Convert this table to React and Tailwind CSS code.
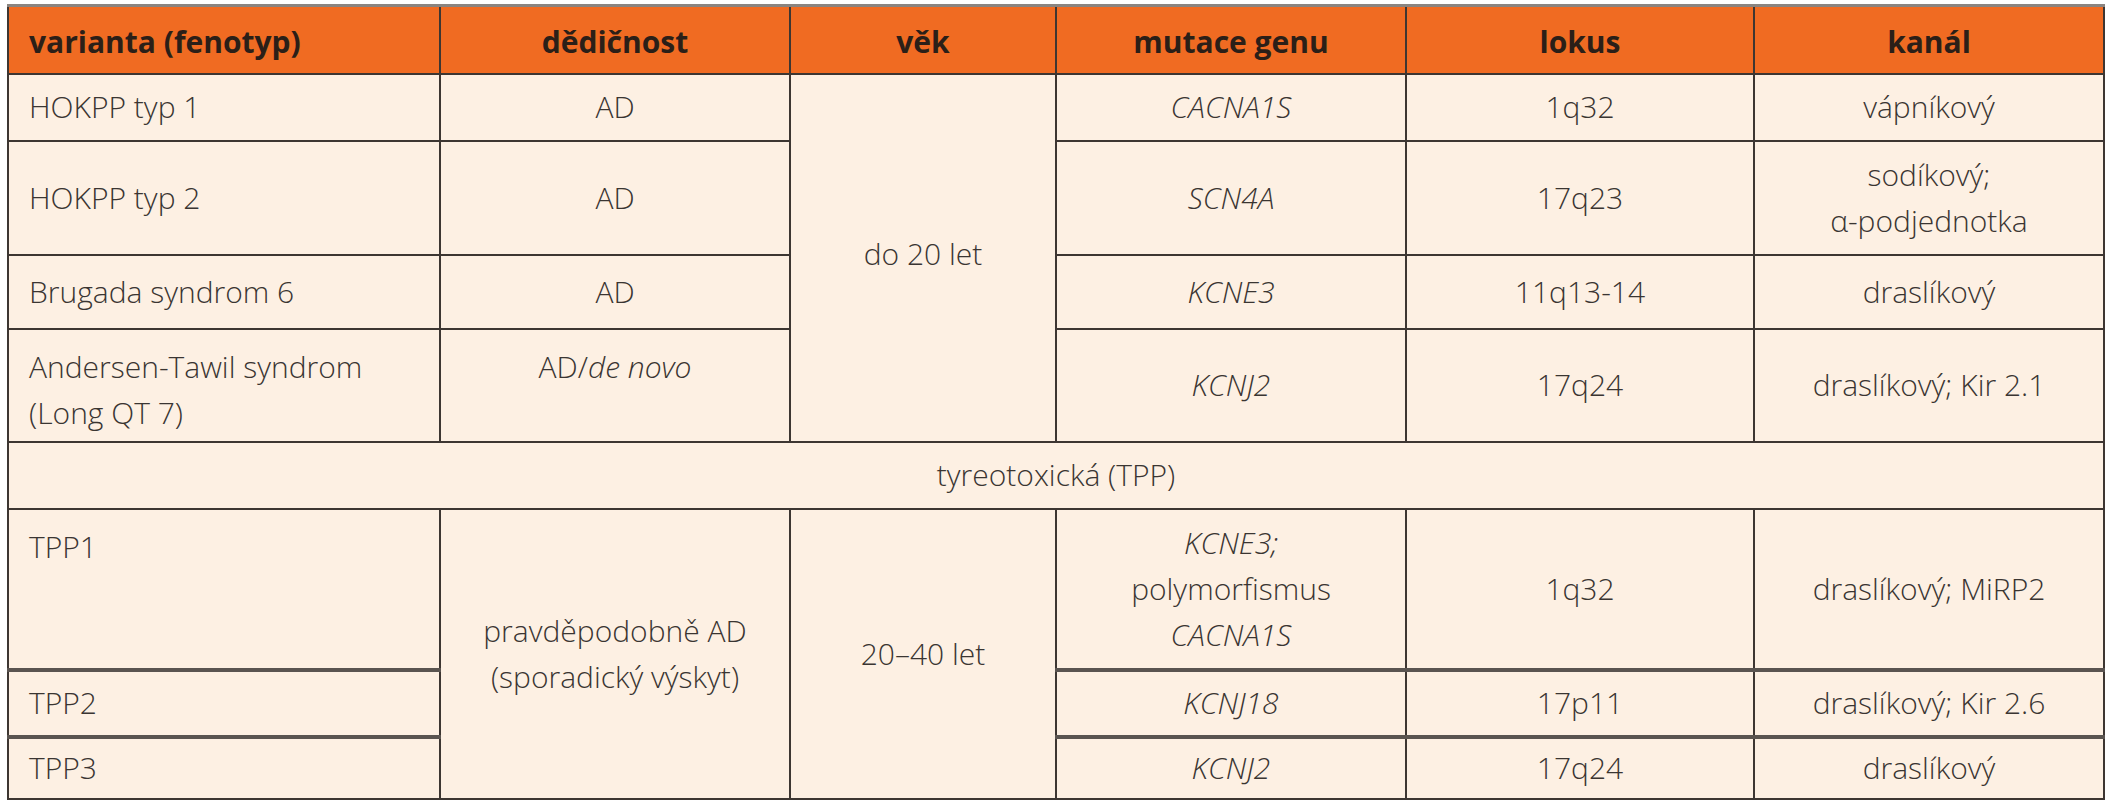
import React from "react";

const cell = "border-2 border-[#3d3632] align-middle text-center px-3";
const first = "border-2 border-[#3d3632] align-middle text-left pl-5 pr-3";

export default function App() {
  return (
    <div className="w-[2116px] h-[800px] bg-white pt-[4px] pl-[7px] font-['Open_Sans',sans-serif] font-light text-[30px] leading-[46px] text-[#3a3532]">
      <table className="table-fixed border-collapse w-[2096px] bg-[#fdf0e3] border-t-[3px] border-t-[#8a8480]">
        <colgroup>
          <col className="w-[432px]" />
          <col className="w-[350px]" />
          <col className="w-[266px]" />
          <col className="w-[350px]" />
          <col className="w-[348px]" />
          <col className="w-[350px]" />
        </colgroup>
        <thead>
          {/* HEADER */}
          <tr className="h-[68px] bg-[#f06b22] text-[#2b1f18] font-bold">
            <th className={first + " pt-1"}>varianta (fenotyp)</th>
            <th className={cell + " pt-1"}>dědičnost</th>
            <th className={cell + " pt-1"}>věk</th>
            <th className={cell + " pt-1"}>mutace genu</th>
            <th className={cell + " pt-1"}>lokus</th>
            <th className={cell + " pt-1"}>kanál</th>
          </tr>
        </thead>
        <tbody>
          <tr className="h-[67px]">
            <td className={first}>HOKPP typ 1</td>
            <td className={cell}>AD</td>
            <td className={cell} rowSpan={4}>
              <div className="pb-2">do 20 let</div>
            </td>
            <td className={cell + " italic"}>CACNA1S</td>
            <td className={cell}>1q32</td>
            <td className={cell}>vápníkový</td>
          </tr>
          <tr className="h-[114px]">
            <td className={first}>HOKPP typ 2</td>
            <td className={cell}>AD</td>
            <td className={cell + " italic"}>SCN4A</td>
            <td className={cell}>17q23</td>
            <td className={cell}>
              sodíkový;
              <br />
              α-podjednotka
            </td>
          </tr>
          <tr className="h-[74px]">
            <td className={first}>Brugada syndrom 6</td>
            <td className={cell}>AD</td>
            <td className={cell + " italic"}>KCNE3</td>
            <td className={cell}>11q13-14</td>
            <td className={cell}>draslíkový</td>
          </tr>
          <tr className="h-[113px]">
            <td className={first + " !align-top pt-[14px]"}>
              Andersen-Tawil syndrom
              <br />
              (Long QT 7)
            </td>
            <td className={cell + " !align-top pt-[14px]"}>
              AD/<span className="italic">de novo</span>
            </td>
            <td className={cell + " italic"}>KCNJ2</td>
            <td className={cell}>17q24</td>
            <td className={cell}>draslíkový; Kir 2.1</td>
          </tr>

          {/* TPP */}
          <tr className="h-[67px]">
            <td className={cell} colSpan={6}>
              tyreotoxická (TPP)
            </td>
          </tr>
          <tr className="h-[161px]">
            <td className={first + " !align-top pt-[14px]"}>TPP1</td>
            <td className={cell} rowSpan={3}>
              pravděpodobně AD
              <br />
              (sporadický výskyt)
            </td>
            <td className={cell} rowSpan={3}>
              20–40 let
            </td>
            <td className={cell + " py-2"}>
              <span className="italic">KCNE3;</span>
              <br />
              polymorfismus
              <br />
              <span className="italic">CACNA1S</span>
            </td>
            <td className={cell}>1q32</td>
            <td className={cell}>draslíkový; MiRP2</td>
          </tr>
          <tr className="h-[67px] border-t-4 border-t-[#5a5450]">
            <td className={first}>TPP2</td>
            <td className={cell + " italic"}>KCNJ18</td>
            <td className={cell}>17p11</td>
            <td className={cell}>draslíkový; Kir 2.6</td>
          </tr>
          <tr className="h-[62px] border-t-4 border-t-[#5a5450]">
            <td className={first}>TPP3</td>
            <td className={cell + " italic"}>KCNJ2</td>
            <td className={cell}>17q24</td>
            <td className={cell}>draslíkový</td>
          </tr>
        </tbody>
      </table>
    </div>
  );
}
